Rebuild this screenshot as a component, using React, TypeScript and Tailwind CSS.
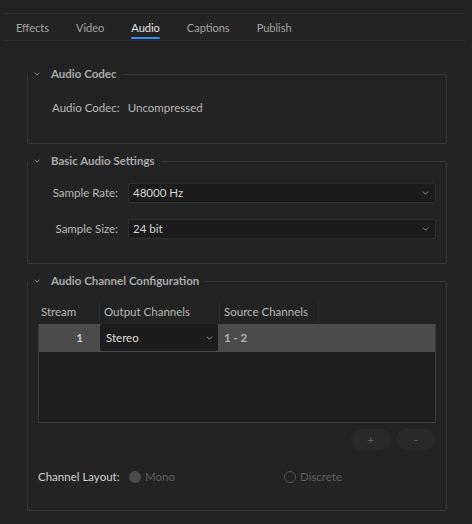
import React from 'react';

const Chevron: React.FC<{ className?: string }> = ({ className }) => (
    <svg viewBox="0 0 8 5" className={className} fill="none" stroke="currentColor" strokeWidth="1.1">
        <polyline points="0.8,0.8 4,4 7.2,0.8" />
    </svg>
);

const tabs = ['Effects', 'Video', 'Audio', 'Captions', 'Publish'];

const Section: React.FC<{ title: string; className?: string; children: React.ReactNode }> = ({ title, className, children }) => (
    <fieldset className="border border-[#363636] rounded-[2px]">
        <legend className="flex items-center h-[14px] pr-[6px]">
            <Chevron className="w-[6px] h-[4px] ml-[6px] mr-[11px] text-[#9a9a9a]" />
            <span className="font-bold text-[#a9a9a9]">{title}</span>
        </legend>
        <div className={`px-[10px] ${className ?? ''}`}>{children}</div>
    </fieldset>
);

const Select: React.FC<{ value: string }> = ({ value }) => (
    <div className="flex-1 h-[20px] flex items-center justify-between bg-[#1b1b1b] border border-[#2e2e2e] rounded-[2px] pl-[4px] pr-[6px]">
        <span className="text-[#d6d6d6]">{value}</span>
        <Chevron className="w-[7px] h-[4px] text-[#9a9a9a]" />
    </div>
);

export default function App() {
    return (
        <div
            className="w-[472px] h-[524px] bg-[#232323] text-[11.5px] text-[#b9b9b9] flex flex-col overflow-hidden"
            style={{ fontFamily: 'Lato, "Open Sans", sans-serif' }}
        >
            <div className="h-[13px] shrink-0" />
            <div className="mx-[4px] mr-[7px] h-[28px] border-y border-[#2f2f2f] flex items-stretch gap-[27px] pl-[12px] pt-[2px] text-[11px]">
                {tabs.map(t => (
                    <div key={t} className="relative flex items-center">
                        <span className={t === 'Audio' ? 'text-[#e4e4e4]' : 'text-[#a3a3a3]'}>{t}</span>
                        {t === 'Audio' && (
                            <div className="absolute left-0 right-0 bottom-[1px] h-[2px] rounded-full bg-[#378ef0]" />
                        )}
                    </div>
                ))}
            </div>

            <div className="flex flex-col gap-[10px] ml-[27px] mr-[25px] mt-[26px]">
                <Section title="Audio Codec" className="pt-[19px] pb-[27px]">
                    <div className="flex items-center h-[16px] pl-[14px] gap-[8px]">
                        <span>Audio Codec:</span>
                        <span>Uncompressed</span>
                    </div>
                </Section>

                <Section title="Basic Audio Settings" className="pt-[15px] pb-[24px]">
                    <div className="flex flex-col gap-[16px]">
                        {[
                            ['Sample Rate:', '48000 Hz'],
                            ['Sample Size:', '24 bit'],
                        ].map(([label, value]) => (
                            <div key={label} className="flex items-center gap-[10px]">
                                <span className="w-[80px] text-right">{label}</span>
                                <Select value={value} />
                            </div>
                        ))}
                    </div>
                </Section>

                <Section title="Audio Channel Configuration" className="pt-[14px] pb-[25px]">
                    <div className="flex h-[20px] items-center">
                        <div className="w-[61px] pl-[3px] h-full flex items-center">Stream</div>
                        <div className="w-[120px] pl-[4px] h-full flex items-center border-l border-[#2c2c2c]">Output Channels</div>
                        <div className="w-[100px] pl-[4px] h-full flex items-center border-x border-[#2c2c2c]">Source Channels</div>
                    </div>
                    <div className="mt-[2px] h-[99px] bg-[#1e1e1e] border border-[#3a3a3a] border-t-0">
                        <div className="flex h-[28px] bg-[#4b4b4b]">
                            <div className="w-[61px] flex items-center justify-end pr-[17px] font-bold text-[#cfcfcf]">1</div>
                            <div className="w-[118px] flex items-center justify-between bg-[#1c1c1c] rounded-[2px] pl-[6px] pr-[5px] mb-[1px]">
                                <span className="text-[#dcdcdc]">Stereo</span>
                                <Chevron className="w-[7px] h-[4px] text-[#a0a0a0]" />
                            </div>
                            <div className="flex items-center pl-[6px] font-bold text-[#b4b4b4]">1 - 2</div>
                        </div>
                    </div>
                    <div className="flex justify-end gap-[6px] mt-[6px]">
                        <div className="w-[39px] h-[21px] rounded-full bg-[#292929] flex items-center justify-center text-[#5c5c5c]">+</div>
                        <div className="w-[40px] h-[21px] rounded-full bg-[#292929] flex items-center justify-center text-[#5c5c5c]">-</div>
                    </div>
                    <div className="flex items-center h-[16px] mt-[19px]">
                        <span className="w-[91px] text-[#d2d2d2]">Channel Layout:</span>
                        <div className="flex items-center gap-[4px] w-[155px]">
                            <span className="w-[12px] h-[12px] rounded-full bg-[#4a4a4a]" />
                            <span className="text-[#5e5e5e]">Mono</span>
                        </div>
                        <div className="flex items-center gap-[4px]">
                            <span className="w-[12px] h-[12px] rounded-full border border-[#4e4e4e]" />
                            <span className="text-[#5e5e5e]">Discrete</span>
                        </div>
                    </div>
                </Section>
            </div>
        </div>
    );
}
